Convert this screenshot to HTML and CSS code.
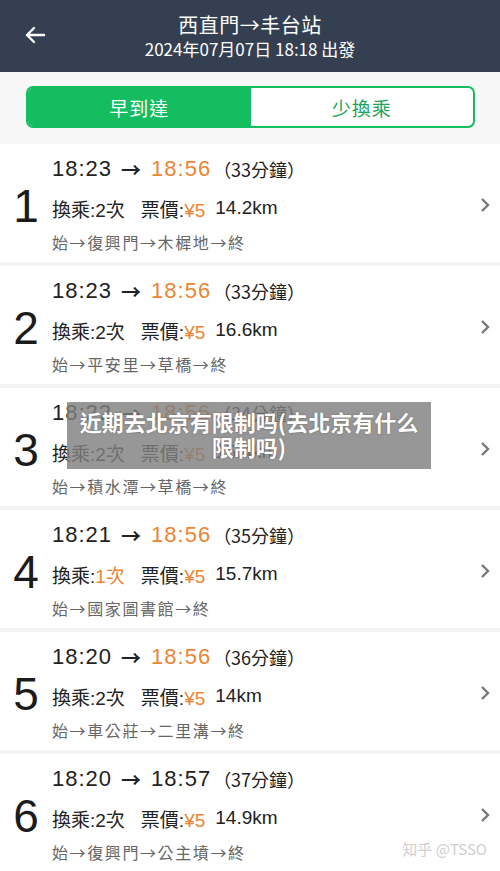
FILE: index.html
```html
<!DOCTYPE html>
<html lang="zh-Hant">

<head>
    <meta charset="UTF-8">
    <meta name="viewport" content="width=device-width, initial-scale=1.0">
    <title>西直門→丰台站</title>
    <link rel="stylesheet" href="styles.css">
</head>

<body>
    <div class="app">
        <!-- top bar -->
        <header class="topbar">
            <div class="back">
                <svg width="22" height="18" viewBox="0 0 22 18">
                    <path d="M20 9H3M10 2L3 9l7 7" fill="none" stroke="#fff" stroke-width="2.4" stroke-linecap="round" stroke-linejoin="round" />
                </svg>
            </div>
            <div class="heading">
                <div class="title">西直門→丰台站</div>
                <div class="subtitle">2024年07月07日 18:18 出發</div>
            </div>
            <div></div>
        </header>

        <!-- sort tabs -->
        <div class="tabs-area">
            <div class="tabs">
                <div class="tab active">早到達</div>
                <div class="tab">少換乘</div>
            </div>
        </div>

        <!-- route list -->
        <ul class="routes">
            <li class="route">
                <div class="num">1</div>
                <div class="info">
                    <div class="times"><span class="t">18:23</span><span class="arrow">→</span><span class="t hot">18:56</span><span class="dur">（33分鐘）</span></div>
                    <div class="meta"><span class="item">換乘:2次</span><span class="item">票價:<span class="hot">¥5</span></span><span>14.2km</span></div>
                    <div class="path">始→復興門→木樨地→終</div>
                </div>
                <div class="chev"><svg width="10" height="16" viewBox="0 0 10 16"><path d="M2 2l6 6-6 6" fill="none" stroke="#777" stroke-width="2.4" /></svg></div>
            </li>
            <li class="route">
                <div class="num">2</div>
                <div class="info">
                    <div class="times"><span class="t">18:23</span><span class="arrow">→</span><span class="t hot">18:56</span><span class="dur">（33分鐘）</span></div>
                    <div class="meta"><span class="item">換乘:2次</span><span class="item">票價:<span class="hot">¥5</span></span><span>16.6km</span></div>
                    <div class="path">始→平安里→草橋→終</div>
                </div>
                <div class="chev"><svg width="10" height="16" viewBox="0 0 10 16"><path d="M2 2l6 6-6 6" fill="none" stroke="#777" stroke-width="2.4" /></svg></div>
            </li>
            <li class="route">
                <div class="num">3</div>
                <div class="info">
                    <div class="times"><span class="t">18:22</span><span class="arrow">→</span><span class="t hot">18:56</span><span class="dur">（34分鐘）</span></div>
                    <div class="meta"><span class="item">換乘:2次</span><span class="item">票價:<span class="hot">¥5</span></span><span>15.4km</span></div>
                    <div class="path">始→積水潭→草橋→終</div>
                </div>
                <div class="chev"><svg width="10" height="16" viewBox="0 0 10 16"><path d="M2 2l6 6-6 6" fill="none" stroke="#777" stroke-width="2.4" /></svg></div>
            </li>
            <li class="route">
                <div class="num">4</div>
                <div class="info">
                    <div class="times"><span class="t">18:21</span><span class="arrow">→</span><span class="t hot">18:56</span><span class="dur">（35分鐘）</span></div>
                    <div class="meta"><span class="item">換乘:<span class="hot">1次</span></span><span class="item">票價:<span class="hot">¥5</span></span><span>15.7km</span></div>
                    <div class="path">始→國家圖書館→終</div>
                </div>
                <div class="chev"><svg width="10" height="16" viewBox="0 0 10 16"><path d="M2 2l6 6-6 6" fill="none" stroke="#777" stroke-width="2.4" /></svg></div>
            </li>
            <li class="route">
                <div class="num">5</div>
                <div class="info">
                    <div class="times"><span class="t">18:20</span><span class="arrow">→</span><span class="t hot">18:56</span><span class="dur">（36分鐘）</span></div>
                    <div class="meta"><span class="item">換乘:2次</span><span class="item">票價:<span class="hot">¥5</span></span><span>14km</span></div>
                    <div class="path">始→車公莊→二里溝→終</div>
                </div>
                <div class="chev"><svg width="10" height="16" viewBox="0 0 10 16"><path d="M2 2l6 6-6 6" fill="none" stroke="#777" stroke-width="2.4" /></svg></div>
            </li>
            <li class="route">
                <div class="num">6</div>
                <div class="info">
                    <div class="times"><span class="t">18:20</span><span class="arrow">→</span><span class="t">18:57</span><span class="dur">（37分鐘）</span></div>
                    <div class="meta"><span class="item">換乘:2次</span><span class="item">票價:<span class="hot">¥5</span></span><span>14.9km</span></div>
                    <div class="path">始→復興門→公主墳→終</div>
                </div>
                <div class="chev"><svg width="10" height="16" viewBox="0 0 10 16"><path d="M2 2l6 6-6 6" fill="none" stroke="#777" stroke-width="2.4" /></svg></div>
            </li>
        </ul>

        <!-- caption laid over the list -->
        <div class="caption">近期去北京有限制吗(去北京有什么限制吗)</div>
        <div class="watermark">知乎 @TSSO</div>
    </div>
</body>

</html>
```

FILE: styles.css
```css
body {
    margin: 0;
    background-color: #f3f3f3;
    font-family: "Liberation Sans", "Noto Sans CJK TC", sans-serif;
    color: #222;
}

.app {
    position: relative;
    width: 500px;
    height: 871px;
    overflow: hidden;
}

/* top bar */
.topbar {
    display: grid;
    grid-template-columns: 70px 1fr 70px;
    align-items: center;
    height: 72px;
    background-color: #344051;
    color: #fff;
}

.back {
    display: flex;
    padding-left: 24px;
    padding-bottom: 2px;
}

.heading {
    text-align: center;
    font-family: "Noto Sans CJK TC", sans-serif;
}

.title {
    font-size: 20px;
    line-height: 26px;
    letter-spacing: 0.5px;
}

.subtitle {
    font-size: 17px;
    line-height: 22px;
}

/* tabs */
.tabs-area {
    padding: 14px 25px 16px 26px;
    background-color: #f7f7f7;
}

.tabs {
    display: flex;
    height: 42px;
    box-sizing: border-box;
    border: 2px solid #14bd5f;
    border-radius: 7px;
    overflow: hidden;
    background-color: #fff;
}

.tab {
    flex: 1;
    display: flex;
    align-items: center;
    justify-content: center;
    font-family: "Noto Sans CJK TC", sans-serif;
    font-size: 19px;
    letter-spacing: 1px;
    color: #20a65c;
}

.tab.active {
    background-color: #14bd5f;
    color: #fff;
}

/* routes */
.routes {
    list-style: none;
    margin: 0;
    padding: 0;
}

.route {
    display: flex;
    align-items: center;
    height: 118px;
    margin-bottom: 4px;
    background-color: #fff;
}

.num {
    width: 52px;
    padding-top: 6px;
    text-align: center;
    font-size: 46px;
    color: #1b1b1b;
}

.info {
    flex: 1;
    display: flex;
    flex-direction: column;
    align-self: stretch;
    padding-top: 9px;
}

.times {
    display: flex;
    align-items: center;
    height: 32px;
    font-size: 22px;
}

.t {
    letter-spacing: 1px;
}

.arrow {
    margin: 0 10px 0 9px;
    font-family: "Noto Sans CJK TC", sans-serif;
    font-weight: 700;
    font-size: 20px;
}

.dur {
    margin-left: 2px;
    font-family: "Noto Sans CJK TC", sans-serif;
    font-size: 18px;
}

.hot {
    color: #ee8433;
}

.meta {
    display: flex;
    align-items: center;
    height: 46px;
    font-size: 19px;
}

.item {
    margin-right: 16px;
}

.item + .item {
    margin-right: 10px;
}

.path {
    height: 22px;
    line-height: 22px;
    font-family: "Noto Sans CJK TC", sans-serif;
    font-size: 16px;
    letter-spacing: 1.6px;
    color: #666;
}

.chev {
    display: flex;
    justify-content: flex-end;
    width: 40px;
    padding-right: 10px;
    padding-top: 4px;
}

/* overlays */
.caption {
    position: absolute;
    left: 67px;
    top: 402px;
    width: 364px;
    height: 67px;
    box-sizing: border-box;
    padding: 7px 4px 0;
    background-color: rgba(128, 128, 128, 0.82);
    color: #fff;
    font-family: "Noto Sans CJK SC", sans-serif;
    font-weight: 700;
    font-size: 22px;
    line-height: 25px;
    text-align: center;
    text-shadow: 0 0 2px rgba(0, 0, 0, 0.35);
}

.watermark {
    position: absolute;
    right: 13px;
    bottom: 12px;
    font-family: "Noto Sans CJK SC", sans-serif;
    font-size: 15px;
    color: #cfcfcf;
}
```
